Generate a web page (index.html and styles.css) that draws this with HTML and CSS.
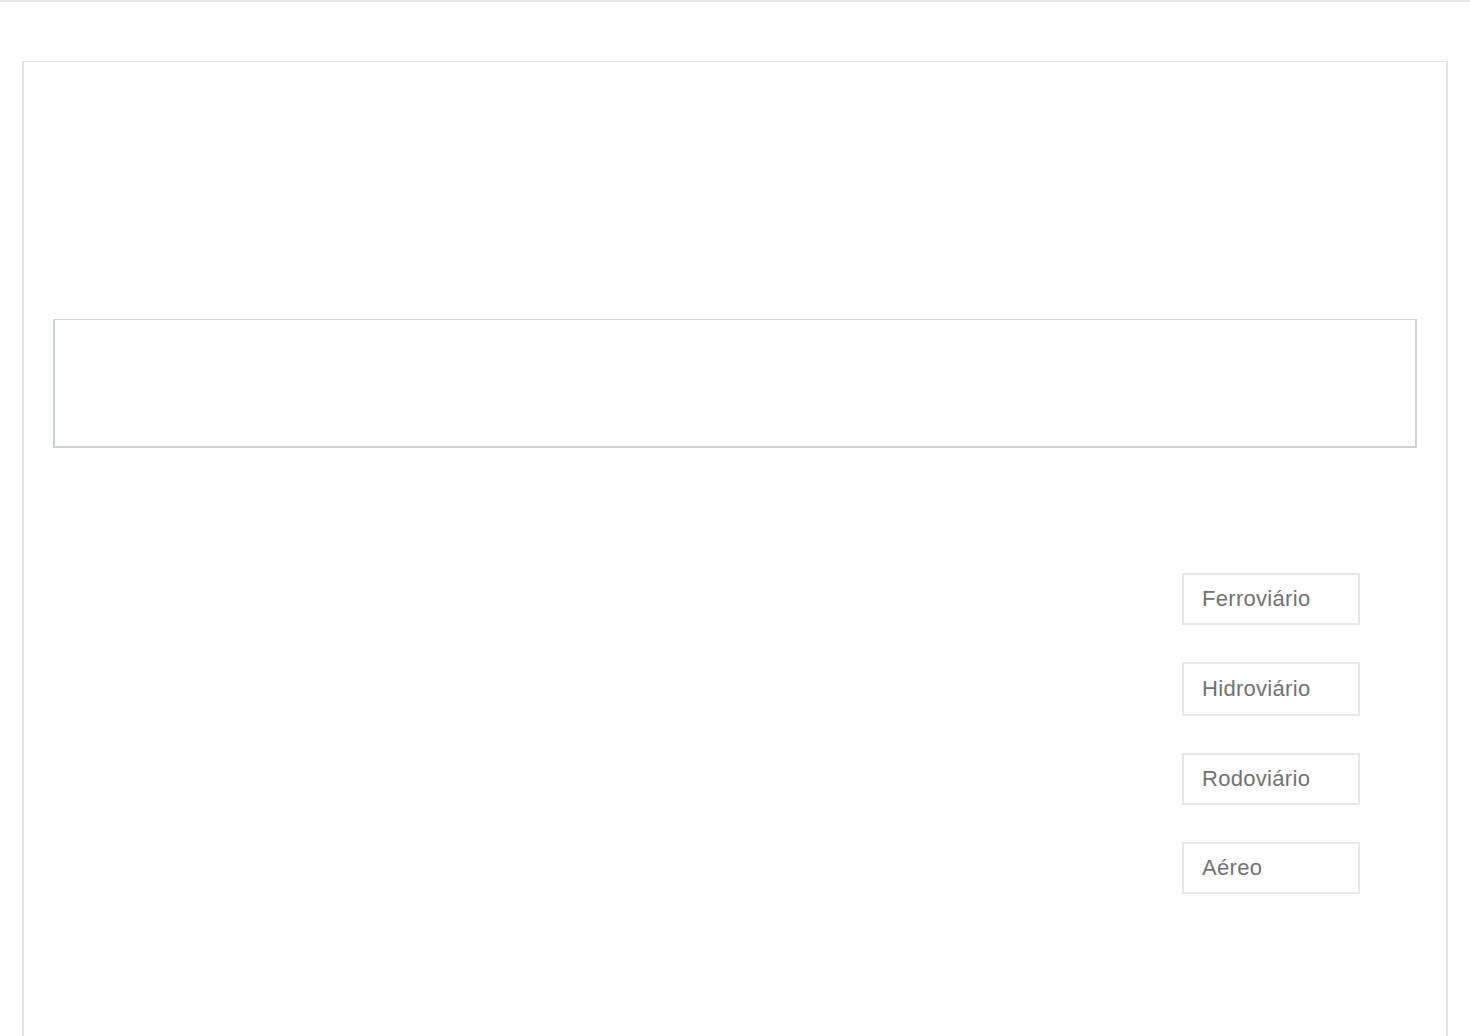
FILE: index.html
```html
<!DOCTYPE html>
<html lang="pt">
<head>
<meta charset="utf-8">
<title>Modais</title>
<link rel="stylesheet" href="styles.css">
</head>
<body>
<div class="topbar"></div>
<main class="frame">
  <div class="banner"></div>
  <ul class="modes">
    <li class="mode">Ferroviário</li>
    <li class="mode mode-tall">Hidroviário</li>
    <li class="mode">Rodoviário</li>
    <li class="mode">Aéreo</li>
  </ul>
</main>
</body>
</html>
```
FILE: styles.css
```css
html, body {
  margin: 0;
  padding: 0;
  background: #ffffff;
  font-family: "Liberation Sans", Arial, sans-serif;
}

body {
  height: 1036px;
  overflow: hidden;
}

.topbar {
  height: 2px;
  background: #e7e4e4;
}

.frame {
  margin: 59px 22px 0 22px;
  border-top: 1px solid #e4e4e4;
  border-left: 2px solid #e4e4e4;
  border-right: 2px solid #e4e4e4;
  padding: 257px 29px 0 29px;
  box-sizing: border-box;
  height: 975px;
}

.banner {
  height: 129px;
  border-top: 1px solid #ccd1da;
  border-left: 2px solid #cbd0d9;
  border-right: 2px solid #cbd0d9;
  border-bottom: 2px solid #cbd0d9;
  box-sizing: border-box;
}

.modes {
  list-style: none;
  margin: 125px 57px 0 0;
  padding: 0;
  display: flex;
  flex-direction: column;
  align-items: flex-end;
  gap: 37px;
}

.mode {
  width: 178px;
  height: 52px;
  box-sizing: border-box;
  border: 2px solid #e5e7eb;
  padding: 0 0 0 18px;
  display: flex;
  align-items: center;
  font-size: 22px;
  color: #727272;
  letter-spacing: 0.3px;
}

.mode-tall {
  height: 54px;
}
```
